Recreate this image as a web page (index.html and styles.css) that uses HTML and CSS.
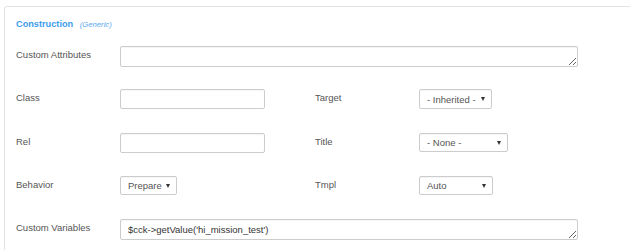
FILE: index.html
```html
<!DOCTYPE html>
<html lang="en">
<head>
  <meta charset="UTF-8">
  <title>Construction</title>
  <link rel="stylesheet" href="styles.css">
</head>
<body>
  <div class="panel">
    <div class="legend">Construction <span class="legend-note">(Generic)</span></div>

    <div class="fields">
      <label class="label">Custom Attributes</label>
      <textarea class="area wide"></textarea>

      <label class="label">Class</label>
      <input class="text" type="text">
      <label class="label">Target</label>
      <div class="pick"><select class="select w-target"><option>- Inherited -</option></select></div>

      <label class="label">Rel</label>
      <input class="text" type="text">
      <label class="label">Title</label>
      <div class="pick"><select class="select w-title"><option>- None -</option></select></div>

      <label class="label">Behavior</label>
      <div class="pick"><select class="select w-behavior"><option>Prepare</option></select></div>
      <label class="label">Tmpl</label>
      <div class="pick"><select class="select w-tmpl"><option>Auto</option></select></div>

      <label class="label">Custom Variables</label>
      <textarea class="area wide">$cck-&gt;getValue('hi_mission_test')</textarea>
    </div>
  </div>
</body>
</html>
```

FILE: styles.css
```css
html, body { margin: 0; overflow: hidden; background: #fff; }
body { font-family: "Liberation Sans", Arial, sans-serif; font-size: 9.5px; color: #555; }

.panel { margin: 6px -20px 0 4px; border: 1px solid #e3e3e3; border-radius: 3px; padding: 10px 0 11px 11px; }

.legend { font-size: 9.2px; font-weight: bold; color: #3d9cec; line-height: 14px; margin-bottom: 14px; }
.legend-note { font-size: 7.7px; font-weight: normal; font-style: italic; color: #5aa8f0; margin-left: 4px; }

.fields { display: grid; grid-template-columns: 104px 195px 104px auto; grid-template-rows: repeat(4, 43.33px) auto;
  align-items: start; justify-items: start; }
.label { line-height: 17px; color: #555; }
.wide { grid-column: 2 / span 3; }

.text, .area, .select { box-sizing: border-box; border: 1px solid #ccc; border-radius: 2px; background: #fff;
  font-family: inherit; font-size: 9.5px; color: #555; box-shadow: inset 0 1px 1px rgba(0,0,0,.04); margin: 0; outline: none; }
.text { width: 145px; height: 20px; }
.area { width: 458px; height: 21px; padding: 4px 7px; line-height: 12px; color: #333; resize: both; overflow: hidden; display: block; }

.pick { position: relative; }
.pick::after { content: ""; position: absolute; right: 7px; top: 8px; border-left: 2.5px solid transparent;
  border-right: 2.5px solid transparent; border-top: 4px solid #333; pointer-events: none; }
.select { -webkit-appearance: none; appearance: none; height: 19.5px; padding: 0 14px 0 7px; display: block; }
.w-target { width: 73px; }
.w-title { width: 89px; }
.w-behavior { width: 57px; }
.w-tmpl { width: 74px; }
```
